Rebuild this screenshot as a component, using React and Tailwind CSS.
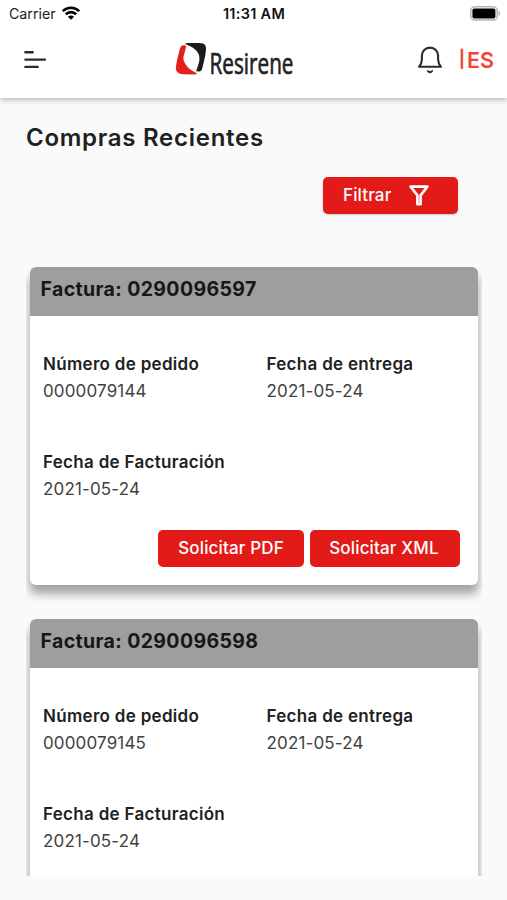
import React from 'react';

const invoices = [
  { id: '0290096597', order: '0000079144', delivery: '2021-05-24', billing: '2021-05-24', canRequest: true },
  { id: '0290096598', order: '0000079145', delivery: '2021-05-24', billing: '2021-05-24', canRequest: false },
];

const WifiIcon = () => (
  <svg className="w-[18px] h-[14px]" viewBox="0 0 18 14" fill="none" stroke="#000" strokeWidth="2.6">
    <path d="M0.8 5.2C5.4 0.6 12.6 0.6 17.2 5.2" />
    <path d="M3.8 8.3C6.8 5.4 11.2 5.4 14.2 8.3" />
    <path d="M9 13.8L5.9 10.8C7.6 9.1 10.4 9.1 12.1 10.8Z" fill="#000" stroke="none" />
  </svg>
);

const BatteryIcon = () => (
  <svg className="w-[31px] h-[15px]" viewBox="0 0 31 15">
    <rect x="0.8" y="0.8" width="26.4" height="13.2" rx="4" fill="#fff" stroke="#b5b5b5" strokeWidth="1.6" />
    <rect x="2.4" y="2.4" width="23" height="10" rx="2" fill="#000" />
    <path d="M28.6 5C30.6 5.8 30.6 9 28.6 9.8Z" fill="#a8a8a8" />
  </svg>
);

const MenuIcon = () => (
  <svg className="w-6 h-5" viewBox="0 0 24 20" stroke="#2b2b2b" strokeWidth="2.4" strokeLinecap="round">
    <path d="M2.4 2.2H9.7M2.4 9.6H21.9M2.4 16.9H14.6" />
  </svg>
);

const BellIcon = () => (
  <svg className="w-[26px] h-7" viewBox="0 0 26 28" fill="none" stroke="#2b2b2b" strokeWidth="2.1" strokeLinejoin="round" strokeLinecap="round">
    <path d="M2 20.8C4 18.4 4.9 16 4.9 13.5V9.8C4.9 5 8.3 1.6 13 1.6S21.1 5 21.1 9.8V13.5C21.1 16 22 18.4 24 20.8Z" />
    <path d="M9.7 24.2H11.2C12 25.4 14 25.4 14.8 24.2H16.3C15.6 28.2 10.4 28.2 9.7 24.2Z" fill="#2b2b2b" stroke="none" />
  </svg>
);

const FilterIcon = () => (
  <svg className="w-5 h-[21px]" viewBox="0 0 20 21" fill="none" stroke="#fff" strokeWidth="2.6" strokeLinejoin="round">
    <path d="M1.6 1.6H18.4L11.6 10.4V19.2H8.4V10.4Z" />
  </svg>
);

const Logo = () => (
  <svg className="w-[120px] h-11 overflow-visible" viewBox="0 -4 120 44">
    <path d="M8 3.3C9.4 3 11 3.4 11 4.6C11 5.8 10.6 7 10.2 8.2L8.4 15.3C8.2 17.5 9 19.5 10 21.3C11.2 23.5 13 25.8 15 27.3C17 28.9 19.2 30 21.7 30.9C22 31.6 21 32.4 20 32.4L8 32.2C2.6 32 0.2 29 1 24.6C1.8 18.4 3.4 12.6 4.8 7C5.4 4.8 6.2 3.6 8 3.3Z" fill="#e3211c" />
    <path d="M9.8 1.9C11 0.9 12.3 0.9 14 0.9L24.8 1.1C29.6 1.3 31.4 3.4 31 7.6C30.6 13.6 28.7 20.8 27.2 26.4C26.6 28.6 25.6 29.3 24.2 29.4L21.2 29.3C22.2 25.6 24.2 21.6 24.4 17.6C24.5 15 24.2 13 23.2 11.2C20.8 6.8 16 4 9.8 1.9Z" fill="#1c1b1c" />
    <text x="34.6" y="32.4" fontFamily="Open Sans, sans-serif" fontSize="28.5" fill="#222" stroke="#222" strokeWidth="0.7" textLength="83.9" lengthAdjust="spacingAndGlyphs">
      Resirene
    </text>
  </svg>
);

const Field = ({ label, value }) => (
  <div className="h-[98px] whitespace-nowrap leading-[27px]">
    <p className="text-[17px] font-semibold tracking-[0.3px] text-[#212121]">{label}</p>
    <p className="text-[17px] tracking-[0.15px] text-[#424242]">{value}</p>
  </div>
);

const RedButton = ({ children, className }) => (
  <button
    className={`flex h-[37px] items-center rounded-[5px] bg-[#e31b18] text-[17px] font-medium tracking-[0.15px] whitespace-nowrap text-white ${className}`}
  >
    {children}
  </button>
);

const InvoiceCard = ({ invoice }) => (
  <div className="h-[352px] shrink-0 px-1 pt-1">
    <div className="h-[318px] overflow-hidden rounded-[6px] bg-white shadow-[0_8px_9px_rgba(0,0,0,0.2),0_9px_12px_rgba(0,0,0,0.2)]">
      <div className="h-[49px] bg-[#9e9e9e] pl-[10.5px] text-[19.5px] leading-[44px] font-bold tracking-[0.37px] text-[#171717]">
        Factura: {invoice.id}
      </div>
      <div className="grid grid-cols-2 gap-x-3 pt-[35px] pl-[13px]">
        <Field label="Número de pedido" value={invoice.order} />
        <Field label="Fecha de entrega" value={invoice.delivery} />
        <Field label="Fecha de Facturación" value={invoice.billing} />
      </div>
      {invoice.canRequest && (
        <div className="-mt-[17px] flex justify-end gap-1.5 pr-[18px]">
          <RedButton className="w-[146px] justify-center">Solicitar PDF</RedButton>
          <RedButton className="w-[150px] justify-center pr-0.5">Solicitar XML</RedButton>
        </div>
      )}
    </div>
  </div>
);

const App = () => {
  return (
    <div className="flex h-[900px] w-[507px] flex-col overflow-hidden bg-[#fafafa] font-['Inter',sans-serif]">
      <header className="z-10 h-[98px] shrink-0 bg-white shadow-[0_1px_6px_rgba(0,0,0,0.35)]">
        {/* Status bar */}
        <div className="grid h-7 grid-cols-3 items-center pr-[6px] pl-[9px]">
          <div className="flex items-center gap-1.5">
            <span className="text-[14.2px] leading-5 text-[#222]">Carrier</span>
            <span className="pb-[2px]">
              <WifiIcon />
            </span>
          </div>
          <span className="pr-0.5 text-center text-[14.5px] leading-5 font-semibold tracking-[0.3px] text-[#111]">11:31 AM</span>
          <div className="flex justify-end pb-[2px]">
            <BatteryIcon />
          </div>
        </div>

        {/* App bar */}
        <div className="flex h-16 items-center pr-[13px] pl-[23px]">
          <MenuIcon />
          <div className="ml-[128px]">
            <Logo />
          </div>
          <div className="ml-auto flex items-center gap-[18px]">
            <BellIcon />
            <div className="flex items-center gap-1 text-[21.5px] font-semibold text-[#f44336]">
              <span className="-mx-[2px] text-[17px] font-bold">|</span>
              <span>ES</span>
            </div>
          </div>
        </div>
      </header>

      <main className="flex flex-col pl-[26px]">
        <h1 className="mt-[22px] text-[24px] leading-9 font-semibold tracking-[0.73px] text-[#212121]">
          Compras Recientes
        </h1>
        <div className="mt-[21px] flex justify-end pr-[49px]">
          <RedButton className="w-[135px] gap-[18px] pl-5 shadow-[0_1px_2px_rgba(0,0,0,0.2)]">
            Filtrar
            <FilterIcon />
          </RedButton>
        </div>

        <div className="mt-[49px] flex h-[613px] w-[456px] flex-col overflow-hidden">
          {invoices.map((invoice) => (
            <InvoiceCard key={invoice.id} invoice={invoice} />
          ))}
        </div>
      </main>
    </div>
  );
};

export default App;
